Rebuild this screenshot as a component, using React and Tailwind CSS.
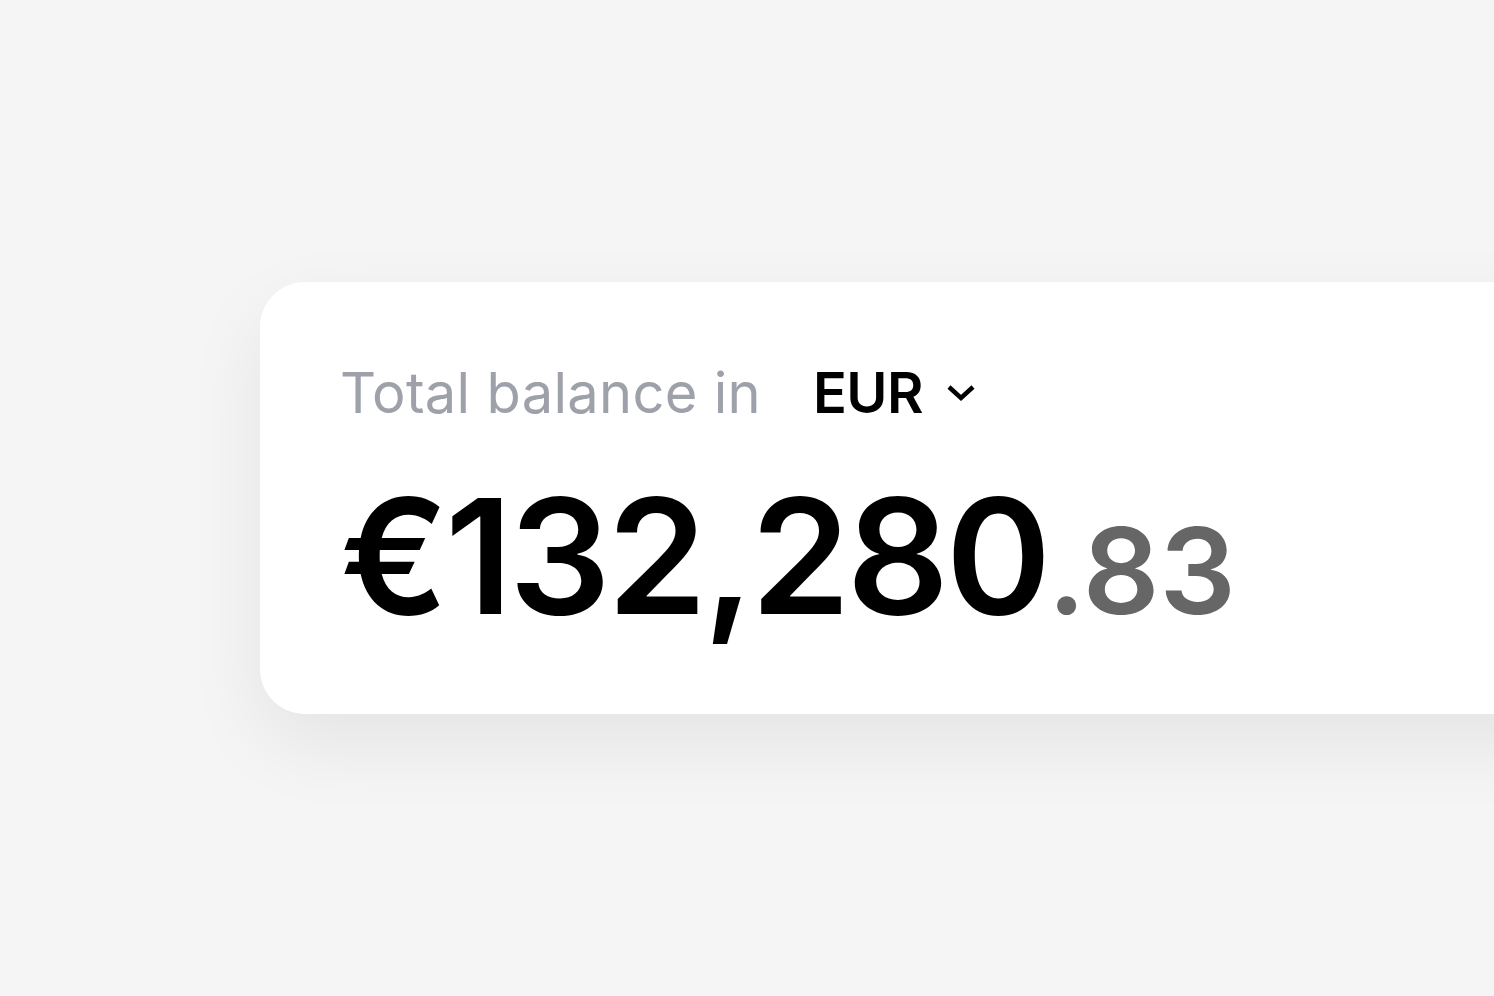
export default function App() {
  return (
    <div
      className="w-[1494px] h-[996px] overflow-hidden bg-[#f5f5f5] flex flex-col"
      style={{ fontFamily: 'Inter, "Noto Sans", sans-serif' }}
    >
      <div className="mt-[282px] ml-[260px] w-[1400px] h-[432px] shrink-0 bg-white rounded-l-[45px] shadow-[0_30px_80px_rgba(0,0,0,0.07)] pl-[80px] pt-[83px]">
        <div className="flex items-center h-[56px] text-[56px] leading-none">
          <span className="text-[#9ea1aa] font-normal tracking-[0.3px]">Total balance in</span>
          <span className="ml-[52px] text-black font-semibold tracking-[-0.5px]">EUR</span>
          <svg className="ml-[22px] mt-[-2px]" width="32" height="20" viewBox="0 0 32 20" fill="none">
            <path d="M4 5 L16 16 L28 5" stroke="#000" strokeWidth="4.5" />
          </svg>
        </div>
        <div className="mt-[55px] flex items-baseline leading-none">
          <span className="text-[160px] font-semibold text-black tracking-[-3.6px]">€132,280</span>
          <span className="text-[120px] font-semibold text-[#666666] tracking-[0px]">.83</span>
        </div>
      </div>
    </div>
  );
}
